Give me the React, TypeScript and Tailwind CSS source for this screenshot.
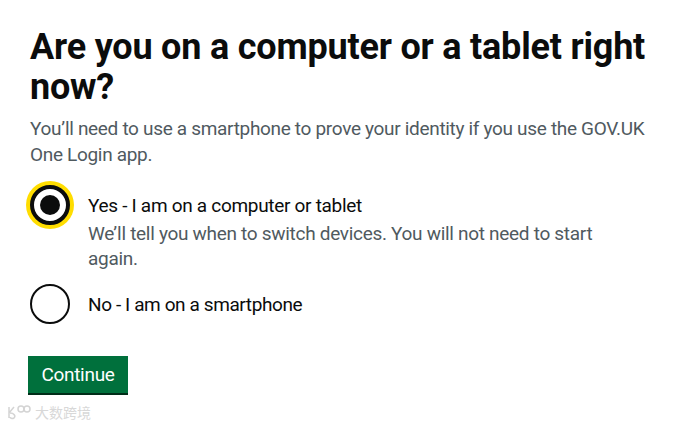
import React from "react";

export default function App() {
  return (
    <div className="min-h-[429px] w-[675px] bg-white relative" style={{ fontFamily: 'Roboto, "Liberation Sans", Arial, sans-serif' }}>
      <div className="pl-[30px] pr-[20px] pt-[27px]">
        <h1 className="text-[36px] leading-[40px] font-bold text-[#0b0c0c] tracking-[-0.2px] w-[635px]">
          Are you on a computer or a tablet right now?
        </h1>
        <p className="mt-[9px] text-[19px] leading-[26px] text-[#505a5f] tracking-[-0.32px] w-[630px]">
          You’ll need to use a smartphone to prove your identity if you use the GOV.UK One Login app.
        </p>

        <div className="mt-[12px] flex flex-col">
          <div className="flex">
            <div className="w-[40px] h-[40px] mt-[5px] shrink-0 rounded-full border-[4px] border-[#0b0c0c] bg-white shadow-[0_0_0_4px_#ffdd00] flex items-center justify-center">
              <div className="w-[20px] h-[20px] rounded-full bg-[#0b0c0c]" />
            </div>
            <div className="ml-[18px] pt-[13px] tracking-[-0.3px]">
              <div className="text-[19px] leading-[25px] text-[#0b0c0c]">Yes - I am on a computer or tablet</div>
              <div className="mt-[3px] text-[19px] leading-[25px] text-[#505a5f] w-[520px]">
                We’ll tell you when to switch devices. You will not need to start again.
              </div>
            </div>
          </div>
          <div className="flex mt-[13px] items-center">
            <div className="w-[40px] h-[40px] shrink-0 rounded-full border-[2px] border-[#0b0c0c] bg-white" />
            <div className="ml-[18px] text-[19px] leading-[25px] text-[#0b0c0c] tracking-[-0.4px]">No - I am on a smartphone</div>
          </div>
        </div>

        <button className="mt-[32px] ml-[-2px] h-[37px] w-[100px] bg-[#00703c] text-white text-[19px] leading-[25px] tracking-[-0.3px] shadow-[0_2px_0_#002d18]">
          Continue
        </button>
      </div>
      <div className="absolute left-[6px] top-[404px] flex items-center gap-[1px] text-[#d8d8d8]">
        <svg width="28" height="16" viewBox="0 0 28 16" fill="none" stroke="#d4d4d4" strokeWidth="1.5">
          <path d="M3 3 L3 14 M3 9 L8 3 M4 9 C8 9 10 12 8 14 C6 15 4 14 4 13" />
          <circle cx="15" cy="5" r="3" />
          <circle cx="21" cy="5" r="3" />
        </svg>
        <span className="text-[14px] leading-[16px]" style={{ fontFamily: '"Noto Sans CJK SC", sans-serif' }}>大数跨境</span>
      </div>
    </div>
  );
}
